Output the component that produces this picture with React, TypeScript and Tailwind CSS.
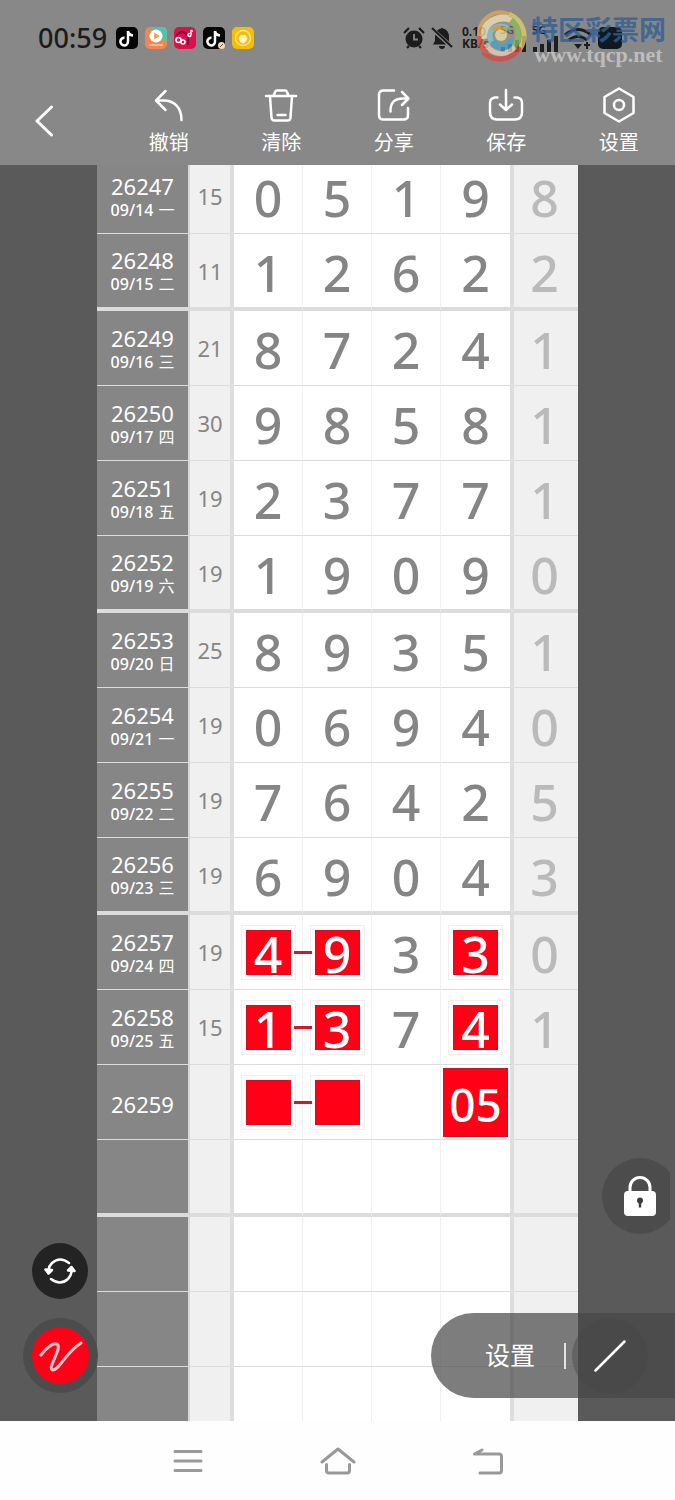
import React, { useState } from 'react';

type Row = {
  issue?: string;
  date?: string;
  day?: string;
  sum?: number;
  digits?: string[];
  extra?: string;
  marked?: boolean;
  pick?: string;
};

const rows: Row[] = [
  { issue: '26247', date: '09/14', day: '一', sum: 15, digits: ['0', '5', '1', '9'], extra: '8' },
  { issue: '26248', date: '09/15', day: '二', sum: 11, digits: ['1', '2', '6', '2'], extra: '2' },
  { issue: '26249', date: '09/16', day: '三', sum: 21, digits: ['8', '7', '2', '4'], extra: '1' },
  { issue: '26250', date: '09/17', day: '四', sum: 30, digits: ['9', '8', '5', '8'], extra: '1' },
  { issue: '26251', date: '09/18', day: '五', sum: 19, digits: ['2', '3', '7', '7'], extra: '1' },
  { issue: '26252', date: '09/19', day: '六', sum: 19, digits: ['1', '9', '0', '9'], extra: '0' },
  { issue: '26253', date: '09/20', day: '日', sum: 25, digits: ['8', '9', '3', '5'], extra: '1' },
  { issue: '26254', date: '09/21', day: '一', sum: 19, digits: ['0', '6', '9', '4'], extra: '0' },
  { issue: '26255', date: '09/22', day: '二', sum: 19, digits: ['7', '6', '4', '2'], extra: '5' },
  { issue: '26256', date: '09/23', day: '三', sum: 19, digits: ['6', '9', '0', '4'], extra: '3' },
  { issue: '26257', date: '09/24', day: '四', sum: 19, digits: ['4', '9', '3', '3'], extra: '0', marked: true },
  { issue: '26258', date: '09/25', day: '五', sum: 15, digits: ['1', '3', '7', '4'], extra: '1', marked: true },
  { issue: '26259', marked: true, pick: '05' },
  {},
  {},
  {},
  {},
];

const line = {
  fill: 'none',
  stroke: 'currentColor',
  strokeWidth: 2.5,
  strokeLinecap: 'round' as const,
  strokeLinejoin: 'round' as const,
};

const tools = [
  {
    label: '撤销',
    icon: (
      <svg viewBox="0 0 34 34" className="size-[34px]" {...line}>
        <path d="M13.500 3 4 12.500l9.500 9.500M4.500 12.500h7c11 0 18 7 18 19.500" />
      </svg>
    ),
  },
  {
    label: '清除',
    icon: (
      <svg viewBox="0 0 34 34" className="size-[34px]" {...line}>
        <path d="M2 8h30M9.500 8l1.500-4q.5-1.500 2-1.500h8q1.500 0 2 1.500l1.500 4M6 8.500l1.500 21q.2 3 3 3h13q2.800 0 3-3l1.500-21M13.500 27h8" />
      </svg>
    ),
  },
  {
    label: '分享',
    icon: (
      <svg viewBox="0 0 34 34" className="size-[34px]" {...line}>
        <path d="M17 2.500H6.500Q2 2.500 2 7v20q0 4.500 4.500 4.500h20q4.500 0 4.500-4.500v-7M25 4l6.500 6.500L25 17M30.500 10.500H26q-13 0-12.500 13" />
      </svg>
    ),
  },
  {
    label: '保存',
    icon: (
      <svg viewBox="0 0 36 34" className="h-[34px] w-[36px]" {...line}>
        <path d="M9.500 9.500H7Q2 10 2 15v9q0 7.500 7 7.500h18q7 0 7-7.500v-9q0-5-5-5.500h-2.500M18 2v19M12 16.500l6 5.500 6-5.500" />
      </svg>
    ),
  },
  {
    label: '设置',
    icon: (
      <svg viewBox="0 0 34 36" className="h-[36px] w-[34px]" {...line}>
        <path d="M17 1.500 31.500 10v16L17 34.500 2.500 26V10Z" />
        <circle cx="17" cy="18" r="5" />
      </svg>
    ),
  },
];

const Note = () => (
  <path
    d="M12 4v10.500a3.800 3.800 0 1 1-3.500-3.700M12 4q.5 4 5 4.500"
    fill="none"
    stroke="#fff"
    strokeWidth="2.500"
  />
);

const AppBadges = () => (
  <div className="flex gap-[7px]">
    <svg viewBox="0 0 22 22" className="size-[22px]">
      <rect width="22" height="22" rx="5" fill="#050505" />
      <Note />
    </svg>
    <svg viewBox="0 0 22 22" className="size-[22px]">
      <rect width="22" height="22" rx="5" fill="#f28550" />
      <path d="M5 0h12q5 0 5 5v9Q10 11 5 0Z" fill="#4fc5a9" />
      <circle cx="11" cy="9" r="6.500" fill="#fff" />
      <path d="m9 5.500 6 3.500-6 3.500Z" fill="#e8a75c" />
      <path d="M4 18h14" stroke="#f8b79a" strokeWidth="2" />
    </svg>
    <svg viewBox="0 0 22 22" className="size-[22px]">
      <rect width="22" height="22" rx="5" fill="#dc0f4b" />
      <path d="M2 9q6-8 12 0v9" fill="none" stroke="#8b0c35" strokeWidth="2" />
      <g fill="none" stroke="#fff" strokeWidth="1.500">
        <circle cx="4.500" cy="13" r="2.500" />
        <circle cx="9" cy="15" r="2" />
        <path d="M17 3v5a1.500 1.500 0 1 1-1-1.500M17 3l2 1.500" />
      </g>
    </svg>
    <svg viewBox="0 0 22 22" className="size-[22px]">
      <rect width="22" height="22" rx="5" fill="#050505" />
      <Note />
      <circle cx="18.500" cy="18.500" r="3.500" fill="#f4d9b8" />
      <path d="m17 20 3-3" stroke="#6b4b2a" />
    </svg>
    <svg viewBox="0 0 22 22" className="size-[22px]">
      <rect width="22" height="22" rx="5" fill="#f4bd08" />
      <circle cx="11" cy="11" r="7.500" fill="none" stroke="#ffe47c" strokeWidth="1.500" />
      <path d="M7.500 9.500q1.500-3 3.500-1 2-2 3.500 1l1 2q-2 5-4.500 5t-4.500-5Z" fill="#fff3c4" />
    </svg>
  </div>
);

const Signal = () => (
  <div className="flex w-[26px] flex-col">
    <span className="text-[11px] leading-[12px] font-semibold">5G</span>
    <svg viewBox="0 0 26 16" className="h-[16px] w-[26px]" fill="#1c1e22">
      <path d="M1 11h4v5H1zM8 8h4v8H8zM15 4h4v12h-4zM22 0h4v16h-4z" />
    </svg>
  </div>
);

const StatusBar = () => (
  <div className="relative flex h-[76px] items-center justify-between pr-[53px] pl-[38px] text-[#1c1c1c]">
    <div className="flex items-center gap-[9px]">
      <time className="text-[27px] leading-[32px] font-medium">00:59</time>
      <AppBadges />
    </div>
    <div className="flex items-center gap-[6px]">
      <svg viewBox="0 0 22 22" className="size-[22px]">
        <circle cx="11" cy="12" r="8.500" fill="currentColor" />
        <path d="m1 6 5-5M21 6l-5-5M4 21l2-2M18 21l-2-2" stroke="currentColor" strokeWidth="2.200" />
        <path d="M11 7v5.500h4" fill="none" stroke="#888" strokeWidth="1.800" />
      </svg>
      <svg viewBox="0 0 22 22" className="size-[22px]">
        <path d="M11 1q-7 1.500-7 9v4l-2 3.500h18L18 14v-4q0-7.500-7-9ZM8 19a3 3 0 0 0 6 0Z" fill="currentColor" />
        <path d="m1 2 20 18" stroke="#888" strokeWidth="4" />
        <path d="m1 1 20 19" stroke="currentColor" strokeWidth="2" />
      </svg>
      <div className="ml-[3px] w-[32px] text-[12px] leading-[12px] font-bold">
        <div>0.10</div>
        <div>KB/s</div>
      </div>
      <Signal />
      <Signal />
      <svg viewBox="0 0 28 22" className="h-[22px] w-[28px]" fill="none" stroke="currentColor" strokeWidth="3">
        <path d="M1 8q13-11 26 0M5 13q9-7 18 0" />
        <path d="m10 17 4 5 4-5Z" fill="currentColor" stroke="none" />
        <path d="M23 15v7M20 18h6" strokeWidth="2" />
      </svg>
      <span className="h-[22px] w-[24px] rounded-[5px] bg-[#101820]" />
    </div>

    <div className="absolute top-[10px] right-[9px] flex items-start gap-[4px]">
      <svg viewBox="0 0 52 52" className="size-[52px] opacity-75" fill="none">
        <circle cx="26" cy="26" r="24" fill="#a89c88" fillOpacity=".6" />
        <path d="M4 29C2 10 18-2 34 4" stroke="#e5a84c" strokeWidth="4" />
        <path d="M9 29C7 13 22 4 38 10" stroke="#f4e6bc" strokeWidth="7" />
        <path d="M34 4c15 7 19 22 11 35" stroke="#e6cf6c" strokeWidth="5" />
        <path d="M36 10c10 8 9 22 0 30" stroke="#8cc05a" strokeWidth="6" />
        <path d="M45 37C37 51 19 53 8 42" stroke="#dc4440" strokeWidth="5" />
        <path d="M40 37C30 47 17 45 11 34" stroke="#f3d3b6" strokeWidth="5" />
        <path d="M4 26c0 8 3 13 8 17" stroke="#e65040" strokeWidth="5" />
        <path d="M17 33c-7-13 6-22 17-14" stroke="#7ad0d8" strokeWidth="5" />
        <path d="M18 31c4 9 16 8 18-2" stroke="#3fa9d8" strokeWidth="6" />
        <circle cx="26" cy="25" r="6" fill="#efe2a4" />
        <path d="M18 20q6-6 13 0" stroke="#eda32c" strokeWidth="4" />
      </svg>
      <div className="flex flex-col items-center pt-[6px]">
        <span className="text-[27px] leading-[28px] font-bold text-[#2f5f96]/80">特区彩票网</span>
        <span className="font-['Liberation_Serif',serif] text-[22px] leading-[22px] font-bold text-[#bdbdbd]">
          www.tqcp.net
        </span>
      </div>
    </div>
  </div>
);

const Toolbar = () => (
  <nav className="grid h-[89px] grid-cols-6 text-white">
    <button type="button" aria-label="返回" className="flex items-center pl-[34px]">
      <svg viewBox="0 0 20 32" className="h-[32px] w-[20px]" {...line} strokeWidth={3}>
        <path d="M17.500 2 3 16l14.500 14" />
      </svg>
    </button>
    {tools.map((tool) => (
      <button key={tool.label} type="button" className="flex flex-col items-center gap-[5px] pt-[10px]">
        <span className="flex h-[38px] items-center">{tool.icon}</span>
        <span className="text-[20px] leading-[28px]">{tool.label}</span>
      </button>
    ))}
  </nav>
);

const DigitCell = ({ row, index }: { row: Row; index: number }) => {
  const value = row.digits ? row.digits[index] : '';

  if (row.pick && index === 3) {
    return (
      <span className="mx-auto flex h-[69px] w-[65px] items-center justify-center border border-[#c01828] bg-[#ff0016] pt-[4px] text-[46px] text-white">
        {row.pick}
      </span>
    );
  }
  if (row.marked && index !== 2) {
    return (
      <span className="relative mx-auto flex size-[45px] items-center justify-center border border-[#d80c20] bg-[#ff0016] pt-[4px] text-white outline outline-offset-4 outline-[#f3eeee]">
        {value}
        {index === 0 && <span className="absolute top-[20px] left-[47px] z-10 h-[3px] w-[18px] bg-[#cc1a2e]" />}
      </span>
    );
  }
  return <span className="block pt-[4px]">{value}</span>;
};

const TrendTable = () => (
  <table className="w-full table-fixed border-separate border-spacing-0 text-center font-medium">
    <colgroup>
      <col className="w-[93px]" />
      <col className="w-[44px]" />
      <col />
      <col />
      <col />
      <col className="w-[73px]" />
      <col className="w-[64px]" />
    </colgroup>
    <tbody>
      {rows.map((row, i) => {
        // every fourth row closes a group with a thick rule
        const thick = i % 4 === 1;
        let edge = thick ? 'h-[77px] border-b-4 border-b-[#dcdcdc]' : 'h-[75px] border-b border-b-[#dcdcdc]';
        if (i === 0) edge = 'h-[69px] pb-[6px] border-b border-b-[#dcdcdc]';
        if (i === rows.length - 1) edge = 'h-[54px]';
        return (
          <tr key={i} className="text-[50px] leading-[50px] text-[#858585]">
            <th scope="row" className={`${edge} border-r-2 border-r-[#d8d8d8] bg-[#868686] font-normal text-white`}>
              <span className="block pt-[3px] text-[22px] leading-[24px]">{row.issue}</span>
              {row.date && (
                <span className="flex items-center justify-center gap-[5px] text-[16px] leading-[24px]">
                  <span className="font-medium">{row.date}</span>
                  <span>{row.day}</span>
                </span>
              )}
            </th>
            <td className={`${edge} border-r-4 border-r-[#dedede] bg-[#f0f0f0] text-[22px] leading-[24px] font-normal`}>
              {row.sum}
            </td>
            {[0, 1, 2, 3].map((n) => (
              <td
                key={n}
                className={`${edge} bg-white ${n === 3 ? 'border-r-4 border-r-[#dedede]' : 'border-r border-r-[#f0f0f0]'}`}
              >
                <DigitCell row={row} index={n} />
              </td>
            ))}
            <td className={`${edge} bg-[#f0f0f0] pr-[3px] text-[#bababa]`}>
              <span className="block pt-[4px]">{row.extra}</span>
            </td>
          </tr>
        );
      })}
    </tbody>
  </table>
);

const App = () => {
  const [locked, setLocked] = useState(true);

  return (
    <div className="bg-[#fefefe] font-['Noto_Sans','Noto_Sans_CJK_SC',sans-serif]">
      <header className="bg-[#888888]">
        <StatusBar />
        <Toolbar />
      </header>

      <main className="relative bg-[#5a5a5a] px-[97px]">
        <TrendTable />

        <button
          type="button"
          aria-label="刷新"
          className="absolute bottom-[122px] left-[32px] flex size-[56px] items-center justify-center rounded-full bg-[#232323] text-white"
        >
          <svg viewBox="0 0 32 28" className="h-[28px] w-[32px]" {...line}>
            <path d="M25 6Q16-1 8 6q-3 3-3.500 7M7 22q9 7 17 0 3-3 3.500-7" />
            <path d="m1.500 12.500 6.500.5-3.500 3.500ZM30.500 14l-6.500-.5 3.500-3.500Z" fill="currentColor" />
          </svg>
        </button>

        <button
          type="button"
          aria-label="画笔"
          className="absolute bottom-[28px] left-[23px] flex size-[75px] items-center justify-center rounded-full bg-[#4c4c4c]"
        >
          <span className="flex size-[57px] items-center justify-center rounded-full bg-[#ff0016]">
            <svg viewBox="0 0 44 32" className="h-[32px] w-[44px]" {...line} stroke="#ffc4c8" strokeWidth={3}>
              <path d="M2 15C8 7 15 2 18.500 4.500 23 9 8 28 13.500 30 20 31 26 13 42 3" />
            </svg>
          </span>
        </button>

        <div className="absolute right-[5px] bottom-[187px] w-[68px] overflow-hidden">
          <button
            type="button"
            aria-label="锁定"
            aria-pressed={locked}
            onClick={() => setLocked(!locked)}
            className="flex size-[76px] items-center justify-center rounded-full bg-[#4c4c4c]"
          >
            <svg viewBox="0 0 34 40" className="h-[40px] w-[34px]">
              <path d="M7 17v-5.500a10 10 0 0 1 20 0V17" fill="none" stroke="#fff" strokeWidth="3" />
              <rect x="1" y="15" width="32" height="25" rx="4" fill="#fff" />
              <circle cx="17" cy="24.500" r="3" fill="#3c3c3c" />
              <path d="M17 25v6.500" stroke="#3c3c3c" strokeWidth="2.500" />
            </svg>
          </button>
        </div>

        <div className="absolute right-0 bottom-[23px] flex h-[85px] items-center rounded-l-full bg-[#464646]/70 pr-[27px] pl-[54px] text-white">
          <button type="button" className="text-[25px]">
            设置
          </button>
          <span className="ml-[29px] h-[26px] w-[2px] bg-white/80" />
          <button
            type="button"
            aria-label="直线"
            className="ml-[6px] flex size-[76px] items-center justify-center rounded-full bg-[#464646]/40"
          >
            <svg viewBox="0 0 32 32" className="size-[32px]" {...line}>
              <path d="M1.500 30.500 30.500 1.500" />
            </svg>
          </button>
        </div>
      </main>

      <footer className="flex h-[79px] items-center justify-center gap-[116px] text-[#999999]">
        <button type="button" aria-label="菜单">
          <svg viewBox="0 0 32 28" className="h-[28px] w-[32px]" {...line} strokeWidth={3}>
            <path d="M3 4.500h26M3 14h26M3 23.500h26" />
          </svg>
        </button>
        <button type="button" aria-label="主页">
          <svg viewBox="0 0 36 28" className="h-[28px] w-[36px]" {...line} strokeWidth={3}>
            <path d="M2 15 18 2l16 13M6.500 17.500v6q0 2.500 2.500 2.500h18q2.500 0 2.500-2.500v-6" />
          </svg>
        </button>
        <button type="button" aria-label="后退">
          <svg viewBox="0 0 32 28" className="h-[28px] w-[32px]" {...line} strokeWidth={3}>
            <path d="M10 3 2.500 7H27q2.500 0 2.500 2.500v14Q29.500 26 27 26H8" />
          </svg>
        </button>
      </footer>
    </div>
  );
};

export default App;
